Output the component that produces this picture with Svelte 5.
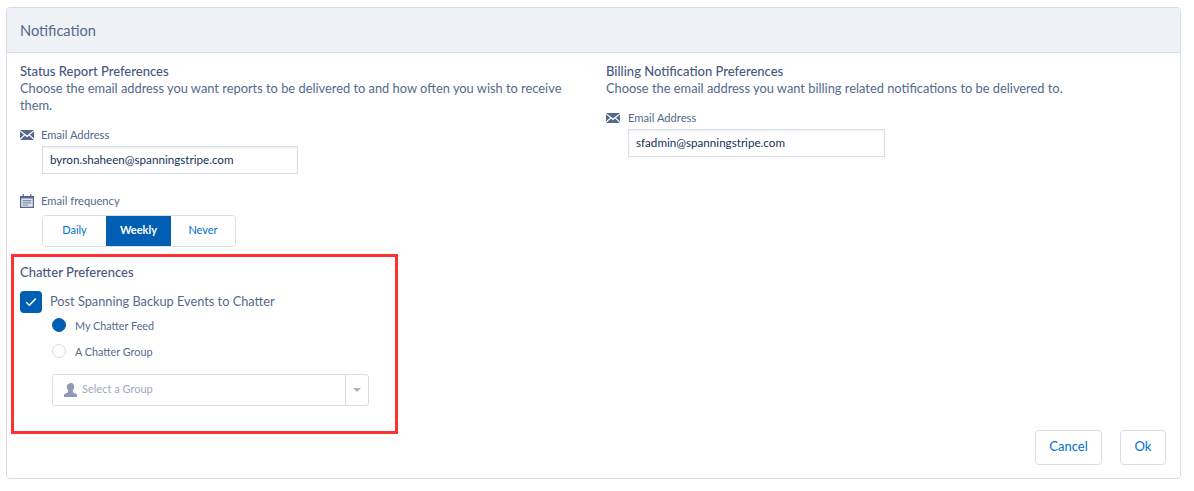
<script>
  let reportEmail = "byron.shaheen@spanningstripe.com";
  let billingEmail = "sfadmin@spanningstripe.com";
  let frequency = "Weekly";
  const frequencies = ["Daily", "Weekly", "Never"];
</script>

<div class="page">
  <div class="card">
    <div class="card-header">Notification</div>
    <div class="card-body">
      <div class="col-left">
        <h3>Status Report Preferences</h3>
        <p>Choose the email address you want reports to be delivered to and how often you wish to receive them.</p>

        <div class="field first">
          <div class="label">
            <svg class="icon" width="14" height="10" viewBox="0 0 14 10">
              <path fill="#54698d" d="M0 0h14L7 5.6zM0 1.3l4 3.4L0 8.6zM14 1.3l-4 3.4 4 3.9zM4.8 5.4L7 7.2l2.2-1.8L13.8 10H.2z" />
            </svg>
            <span>Email Address</span>
          </div>
          <input class="text-input" type="text" value={reportEmail} />
        </div>

        <div class="field freq">
          <div class="label">
            <svg class="icon" width="14" height="14" viewBox="0 0 14 14">
              <path fill="#54698d" d="M0 2h2.6V0h1.2v2h6.4V0h1.2v2H14v12H0z" />
              <path fill="#dfe4ee" d="M1.2 4.4h11.6v8.4H1.2z" />
              <path fill="#7f8fab" d="M2.6 6h8.8v1.2H2.6zM2.6 8.2h8.8v1.2H2.6zM2.6 10.4h6v1.2h-6z" />
            </svg>
            <span>Email frequency</span>
          </div>
          <div class="segments">
            {#each frequencies as f}
              <button class="segment" class:active={f === frequency} onclick={() => (frequency = f)}>{f}</button>
            {/each}
          </div>
        </div>

        <section class="chatter">
          <h3>Chatter Preferences</h3>
          <div class="check-row">
            <span class="checkbox">
              <svg width="12" height="10" viewBox="0 0 12 10">
                <path d="M1.2 5.2l3.2 3L10.8 1.4" fill="none" stroke="#fff" stroke-width="1.5" />
              </svg>
            </span>
            <span>Post Spanning Backup Events to Chatter</span>
          </div>
          <div class="radio-row">
            <span class="radio on"></span>
            <span>My Chatter Feed</span>
          </div>
          <div class="radio-row second">
            <span class="radio"></span>
            <span>A Chatter Group</span>
          </div>
          <div class="select">
            <div class="select-value">
              <svg width="14" height="14" viewBox="0 0 14 14">
                <path fill="#8d9bb3" d="M7 0c2 0 3.2 1.5 3.2 3.7 0 1.6-.6 3-1.4 3.8v1.3c0 .6 1 1 2.2 1.5 1.3.5 2 1 2 1.6V14H0v-2.1c0-.6.7-1.100 2-1.600 1.200-.5 2.200-.9 2.200-1.500V7.500C3.400 6.700 2.800 5.300 2.800 3.700 2.800 1.500 5 0 7 0z" />
              </svg>
              <span class="placeholder">Select a Group</span>
            </div>
            <div class="select-arrow"></div>
          </div>
        </section>
      </div>

      <div class="col-right">
        <h3>Billing Notification Preferences</h3>
        <p>Choose the email address you want billing related notifications to be delivered to.</p>
        <div class="field billing">
          <div class="label">
            <svg class="icon" width="14" height="10" viewBox="0 0 14 10">
              <path fill="#54698d" d="M0 0h14L7 5.6zM0 1.3l4 3.4L0 8.6zM14 1.3l-4 3.4 4 3.9zM4.8 5.4L7 7.2l2.2-1.8L13.8 10H.2z" />
            </svg>
            <span>Email Address</span>
          </div>
          <input class="text-input" type="text" value={billingEmail} />
        </div>
        <div class="actions">
          <button class="btn cancel">Cancel</button>
          <button class="btn ok">Ok</button>
        </div>
      </div>
    </div>
  </div>
</div>

<style>
  :global(body) {
    margin: 0;
    background: #fff;
  }
  .page {
    padding: 7px 13px 0 6px;
    font-family: Lato, "Open Sans", sans-serif;
    color: #54698d;
  }
  .card {
    height: 472px;
    box-sizing: border-box;
    border: 1px solid #d8dde6;
    border-radius: 4px;
    display: flex;
    flex-direction: column;
  }
  .card-header {
    height: 45px;
    box-sizing: border-box;
    background: #eef1f6;
    border-bottom: 1px solid #d8dde6;
    border-radius: 3px 3px 0 0;
    padding-left: 13px;
    font-size: 14.6px;
    line-height: 45px;
    color: #54698d;
  }
  .card-body {
    flex: 1;
    display: grid;
    grid-template-columns: 586px 1fr;
    padding: 10px 14px 13px 13px;
  }
  h3 {
    margin: 0;
    font-size: 13px;
    line-height: 17px;
    font-weight: 500;
    color: #47597f;
  }
  p {
    margin: 0;
    font-size: 12.85px;
    line-height: 17px;
    width: 555px;
  }
  .col-left {
    min-width: 0;
  }
  .col-right {
    display: flex;
    flex-direction: column;
  }
  .field.first {
    margin-top: 12px;
  }
  .field.billing {
    margin-top: 12px;
  }
  .field.billing .icon {
    margin-right: 8px;
  }
  .field.billing .text-input {
    width: 257px;
  }
  .field.freq {
    margin-top: 18px;
  }
  .label {
    display: flex;
    align-items: center;
    height: 17px;
    font-size: 11.2px;
    color: #54698d;
  }
  .icon {
    width: 14px;
    margin-right: 7px;
    flex: none;
  }
  .text-input {
    display: block;
    margin: 3px 0 0 22px;
    width: 256px;
    height: 28px;
    box-sizing: border-box;
    border: 1px solid #d8dde6;
    box-shadow: inset 0 1px 2px rgba(84, 105, 141, 0.12);
    padding: 0 7px 2px;
    font: 11.65px Lato, "Open Sans", sans-serif;
    color: #16325c;
    outline: none;
  }
  .segments {
    display: grid;
    grid-template-columns: 63px 65px 1fr;
    margin: 6px 0 0 22px;
    width: 194px;
    height: 32px;
    box-sizing: border-box;
    border: 1px solid #d8dde6;
    border-radius: 4px;
    overflow: hidden;
  }
  .segment {
    border: 0;
    padding: 0 0 3px;
    background: #fff;
    font: 11px Lato, "Open Sans", sans-serif;
    color: #0070d2;
  }
  .segment.active {
    background: #005fb2;
    color: #fff;
    font-weight: 700;
  }
  .chatter {
    margin: 7px 0 0 -9px;
    width: 387px;
    height: 180px;
    box-sizing: border-box;
    border: 3px solid #ff3130;
    padding: 7px 6px 0;
  }
  .check-row {
    display: flex;
    align-items: center;
    gap: 8px;
    margin-top: 10px;
    font-size: 12.75px;
    height: 22px;
  }
  .check-row > span:last-child {
    padding-bottom: 2px;
  }
  .checkbox {
    width: 22px;
    height: 22px;
    background: #005fb2;
    border-radius: 4px;
    display: flex;
    align-items: center;
    justify-content: center;
  }
  .radio-row {
    display: flex;
    align-items: center;
    gap: 9px;
    margin: 2px 0 0 32px;
    font-size: 10.8px;
    height: 20px;
  }
  .radio-row.second {
    margin-top: 6px;
  }
  .radio {
    width: 14px;
    height: 14px;
    box-sizing: border-box;
    border: 1px solid #d8dde6;
    border-radius: 50%;
  }
  .radio.on {
    background: #005fb2;
    border-color: #005fb2;
  }
  .select {
    display: flex;
    margin: 13px 0 0 32px;
    width: 317px;
    height: 32px;
    box-sizing: border-box;
    border: 1px solid #d8dde6;
    border-radius: 3px;
  }
  .select-value {
    flex: 1;
    display: flex;
    align-items: center;
    gap: 4px;
    padding-left: 11px;
    font-size: 11px;
    color: #9faabd;
  }
  .placeholder {
    padding-bottom: 3px;
  }
  .select-arrow {
    width: 22px;
    border-left: 1px solid #d8dde6;
    position: relative;
  }
  .select-arrow::after {
    content: "";
    position: absolute;
    left: 7px;
    top: 13px;
    border: 4px solid transparent;
    border-top-color: #a8b2c4;
  }
  .actions {
    margin-top: auto;
    display: flex;
    justify-content: flex-end;
    gap: 18px;
  }
  .btn {
    height: 35px;
    box-sizing: border-box;
    background: #fff;
    border: 1px solid #d8dde6;
    border-radius: 4px;
    font: 13px Lato, "Open Sans", sans-serif;
    color: #0070d2;
    padding: 0 0 3px;
  }
  .cancel {
    width: 67px;
  }
  .ok {
    width: 46px;
  }
</style>
